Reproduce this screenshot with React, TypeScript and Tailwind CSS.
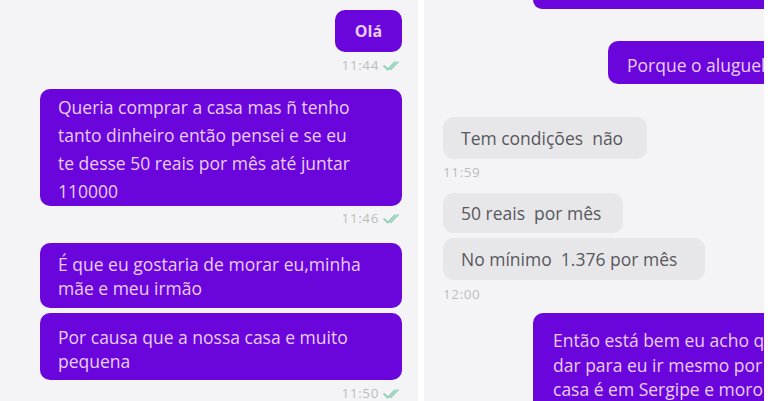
import React from 'react';

const font = { fontFamily: '"Open Sans", Lato, sans-serif' };

function Check() {
    return (
        <svg width="19" height="11" viewBox="0 0 19 11" className="ml-[4px]">
            <path d="M1 6 L4.8 9.5 L12 2" stroke="#8fcfb3" strokeWidth="1.7" fill="none" strokeLinecap="round" />
            <path d="M7.5 9.5 L15 2" stroke="#8fcfb3" strokeWidth="1.7" fill="none" strokeLinecap="round" />
        </svg>
    );
}

function Time({ t, sent }: { t: string; sent?: boolean }) {
    return (
        <div className={"flex items-center h-[16px] text-[13.5px] tracking-[0.6px] text-[#bcbcc0] " + (sent ? "justify-end" : "justify-start")}>
            <span>{t}</span>
            {sent && <Check />}
        </div>
    );
}

export default function App() {
    return (
        <div className="flex w-[768px] h-[401px] bg-white overflow-hidden" style={font}>
            {/* left chat */}
            <div className="w-[418px] h-full bg-[#f4f4f6] flex flex-col items-end pr-[16px] pt-[10px]">
                <div className="w-[67px] h-[43px] rounded-[10px] bg-[#6a06dc] text-[#e9cdf8] text-[16px] font-bold flex items-center justify-center">
                    Olá
                </div>
                <div className="mt-[5px] w-full"><Time t="11:44" sent /></div>
                <div className="mt-[16px] w-[362px] h-[119px] rounded-[10px] bg-[#6a06dc] text-[#e9cdf8] text-[17.5px] font-medium leading-[28px] pl-[18px] pt-[4px]">
                    Queria comprar a casa mas ñ tenho<br />
                    tanto dinheiro então pensei e se eu<br />
                    te desse 50 reais por mês até juntar<br />
                    110000
                </div>
                <div className="mt-[4px] w-full"><Time t="11:46" sent /></div>
                <div className="mt-[17px] w-[362px] h-[66px] rounded-[10px] bg-[#6a06dc] text-[#e9cdf8] text-[17.5px] font-medium leading-[24px] pl-[18px] pt-[9px]">
                    É que eu gostaria de morar eu,minha<br />
                    mãe e meu irmão
                </div>
                <div className="mt-[5px] w-[362px] h-[68px] rounded-[10px] bg-[#6a06dc] text-[#e9cdf8] text-[17.5px] font-medium leading-[24px] pl-[18px] pt-[12px]">
                    Por causa que a nossa casa e muito<br />
                    pequena
                </div>
                <div className="mt-[5px] w-full"><Time t="11:50" sent /></div>
            </div>

            <div className="w-[6px] h-full bg-white" />

            {/* right chat */}
            <div className="w-[340px] h-full bg-[#f4f4f6] overflow-hidden">
                <div className="w-[360px] flex flex-col">
                    <div className="ml-[109px] h-[9px] rounded-b-[10px] bg-[#6a06dc]" />
                    <div className="ml-[184px] mt-[32px] h-[43px] rounded-[10px] bg-[#6a06dc] text-[#e9cdf8] text-[17.5px] font-medium flex items-center pl-[19px] pt-[5px] whitespace-nowrap">
                        Porque o aluguel
                    </div>
                    <div className="ml-[19px] mt-[33px] self-start h-[42px] rounded-[10px] bg-[#e7e7ea] text-[#58585c] text-[17.5px] flex items-center pl-[18px] pr-[24px] whitespace-pre">
                        {"Tem condições  não"}
                    </div>
                    <div className="ml-[19px] mt-[5px]"><Time t="11:59" /></div>
                    <div className="ml-[19px] mt-[13px] self-start h-[40px] rounded-[10px] bg-[#e7e7ea] text-[#58585c] text-[17.5px] flex items-center pl-[18px] pr-[22px] whitespace-pre">
                        {"50 reais  por mês"}
                    </div>
                    <div className="ml-[19px] mt-[5px] self-start h-[42px] rounded-[10px] bg-[#e7e7ea] text-[#58585c] text-[17.5px] flex items-center pl-[18px] pr-[28px] whitespace-pre">
                        {"No mínimo  1.376 por mês"}
                    </div>
                    <div className="ml-[19px] mt-[6px]"><Time t="12:00" /></div>
                    <div className="ml-[109px] mt-[11px] h-[110px] rounded-[10px] bg-[#6a06dc] text-[#e9cdf8] text-[17.5px] font-medium leading-[24.5px] pl-[20px] pt-[15px] whitespace-nowrap">
                        Então está bem eu acho q<br />
                        dar para eu ir mesmo por<br />
                        casa é em Sergipe e moro
                    </div>
                </div>
            </div>

            <div className="w-[4px] h-full bg-white" />
        </div>
    );
}
